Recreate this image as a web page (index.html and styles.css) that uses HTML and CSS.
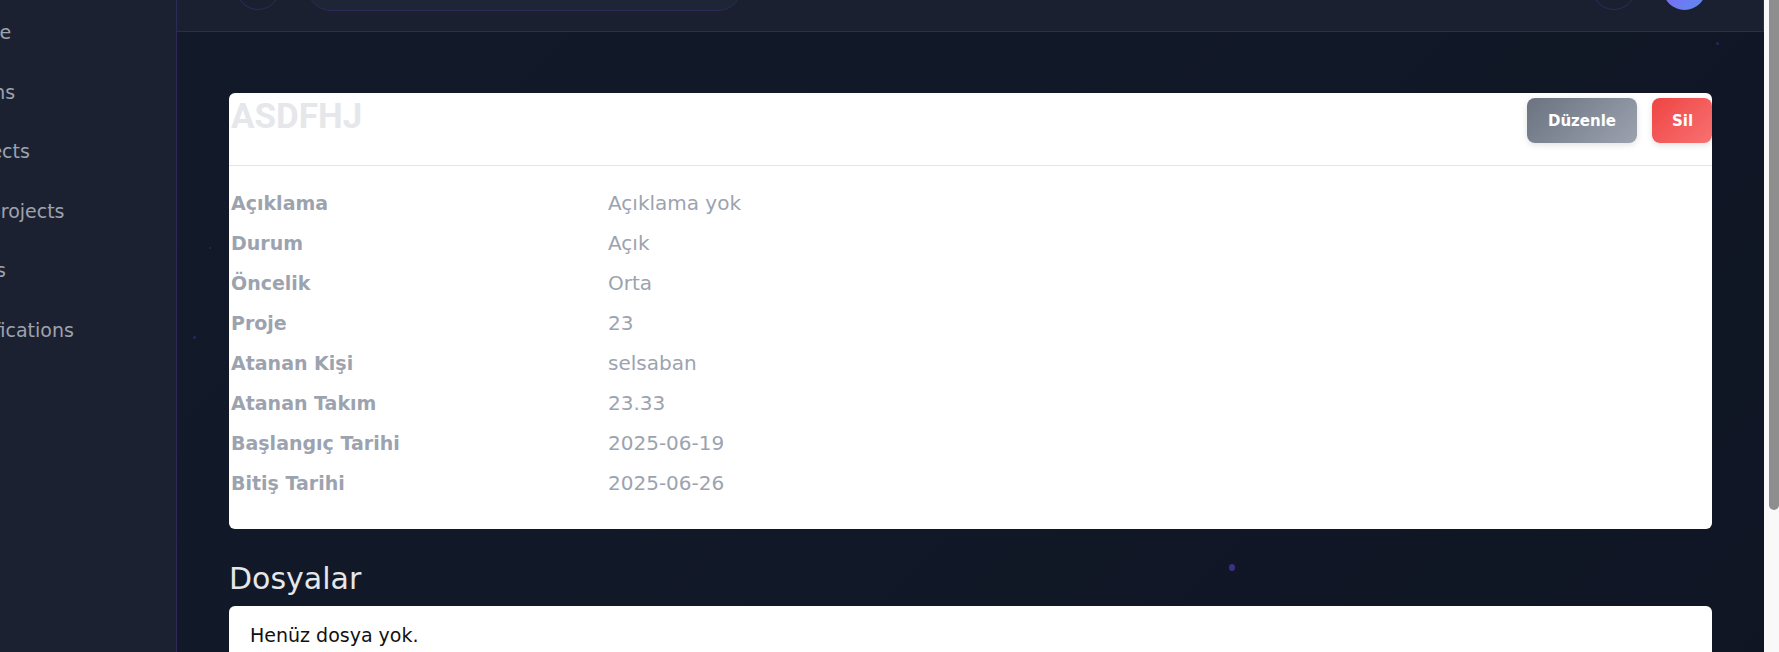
FILE: index.html
```html
<!DOCTYPE html>
<html lang="tr">
<head>
    <meta charset="UTF-8">
    <meta name="viewport" content="width=device-width, initial-scale=1.0">
    <title>Görev Detayı</title>
    <link rel="stylesheet" href="styles.css">
</head>
<body>
    <div class="layout">
        <aside class="sidebar">
            <nav class="nav">
                <a class="nav-item" href="#">Home</a>
                <a class="nav-item" href="#">Teams</a>
                <a class="nav-item" href="#">Projects</a>
                <a class="nav-item" href="#">My projects</a>
                <a class="nav-item" href="#">Tasks</a>
                <a class="nav-item" href="#">Notifications</a>
            </nav>
        </aside>

        <div class="main">
            <header class="topbar">
                <div class="topbar-left">
                    <button class="icon-btn" aria-label="Menu"></button>
                    <div class="search"></div>
                </div>
                <div class="topbar-right">
                    <button class="icon-btn" aria-label="Bildirimler"></button>
                    <div class="avatar"></div>
                </div>
            </header>

            <main class="content">
                <section class="card">
                    <div class="card-head">
                        <h1 class="task-title">ASDFHJ</h1>
                        <div class="actions">
                            <button class="btn btn-edit">Düzenle</button>
                            <button class="btn btn-delete">Sil</button>
                        </div>
                    </div>
                    <dl class="details">
                        <dt>Açıklama</dt><dd>Açıklama yok</dd>
                        <dt>Durum</dt><dd>Açık</dd>
                        <dt>Öncelik</dt><dd>Orta</dd>
                        <dt>Proje</dt><dd>23</dd>
                        <dt>Atanan Kişi</dt><dd>selsaban</dd>
                        <dt>Atanan Takım</dt><dd>23.33</dd>
                        <dt>Başlangıç Tarihi</dt><dd>2025-06-19</dd>
                        <dt>Bitiş Tarihi</dt><dd>2025-06-26</dd>
                    </dl>
                </section>

                <h2 class="section-title">Dosyalar</h2>
                <div class="files-box">Henüz dosya yok.</div>
            </main>
        </div>

        <!-- background particles -->
        <span class="dot dot-1"></span>
        <span class="dot dot-2"></span>
        <span class="dot dot-3"></span>
        <span class="dot dot-4"></span>
    </div>

    <div class="scrollbar">
        <div class="scrollbar-thumb"></div>
    </div>
</body>
</html>
```

FILE: styles.css
```css
body {
    margin: 0;
    display: flex;
    align-items: flex-start;
    height: 100vh;
    overflow: hidden;
    font-family: "DejaVu Sans", "Noto Sans", sans-serif;
    background-color: #111827;
}
.layout {
    position: relative;
    flex: 1;
    min-width: 0;
    display: flex;
    min-height: 834px;
}

/* fake page scrollbar */
.scrollbar {
    width: 15px;
    height: 100vh;
    flex-shrink: 0;
    display: flex;
    justify-content: flex-end;
    background-color: #f9f9f9;
}
.scrollbar-thumb {
    width: 10px;
    height: 510px;
    background-color: #8e8e8e;
    border-radius: 0 0 5px 5px;
}

/* sidebar */
.sidebar {
    width: 176px;
    flex-shrink: 0;
    background-color: #1c2131;
    border-right: 1px solid #2d2a5a;
    overflow: hidden;
}
.nav {
    display: flex;
    flex-direction: column;
    margin-left: -45px;
    padding-top: 2px;
}
.nav-item {
    padding: 16px 0 15.5px;
    line-height: 28px;
    font-size: 19px;
    color: #9ca3af;
    text-decoration: none;
    white-space: nowrap;
}

/* top bar */
.main {
    flex: 1;
    min-width: 0;
    background: linear-gradient(135deg, #121929 0%, #111827 40%, #0f1523 100%);
}
.topbar {
    display: flex;
    justify-content: space-between;
    align-items: flex-end;
    padding: 0 57px 21px 59px;
    box-sizing: border-box;
    height: 32px;
    background-color: #1b2030;
    border-right: 1px solid #2d2a5a;
    border-bottom: 1px solid #2d2a5a;
    overflow: hidden;
}
.topbar-left,
.topbar-right {
    display: flex;
    align-items: flex-end;
    gap: 27px;
}
.icon-btn {
    width: 44px;
    height: 44px;
    flex-shrink: 0;
    border: 1px solid #2d2a5a;
    border-radius: 50%;
    background: transparent;
}
.search {
    width: 433px;
    height: 46px;
    margin-bottom: -1px;
    border: 1px solid #2d2a5a;
    border-radius: 24px;
    background-color: #1e2536;
}
.avatar {
    width: 43px;
    height: 43px;
    border-radius: 50%;
    background: linear-gradient(135deg, #8b5cf6, #5b8def);
}

/* content */
.content {
    padding: 61px 52px 40px;
}
.card {
    background-color: #fff;
    border-radius: 6px;
    padding: 0 0 32px 2px;
}
.card-head {
    display: flex;
    justify-content: space-between;
    align-items: flex-start;
    height: 73px;
    box-sizing: border-box;
    padding-top: 2px;
    margin-left: -2px;
    padding-left: 2px;
    border-bottom: 1px solid #e4e0fb;
}
.task-title {
    margin: 2px 0 0;
    font-family: Roboto, "Liberation Sans", sans-serif;
    font-size: 35px;
    line-height: 40px;
    font-weight: 700;
    color: #e5e7eb;
}
.actions {
    display: flex;
    gap: 15px;
    margin-top: 3px;
}
.btn {
    height: 45px;
    padding: 0 20px;
    border: none;
    border-radius: 8px;
    font-family: "DejaVu Sans", "Noto Sans", sans-serif;
    font-size: 15px;
    font-weight: 700;
    color: #fff;
    cursor: pointer;
    box-shadow: 0 2px 6px rgba(0, 0, 0, 0.12);
}
.btn-edit {
    width: 110px;
    background: linear-gradient(135deg, #6b7280, #9ca3af);
}
.btn-delete {
    width: 60px;
    background: linear-gradient(135deg, #ef4444, #f87171);
}
.details {
    display: grid;
    grid-template-columns: 377px 1fr;
    row-gap: 12px;
    margin: 0;
    padding-top: 23px;
    font-size: 20px;
    line-height: 28px;
    color: #9ca3af;
}
.details dt {
    font-weight: 700;
    font-size: 19px;
}
.details dd {
    margin: 0;
}
.section-title {
    margin: 32px 0 9px;
    font-size: 30px;
    line-height: 36px;
    font-weight: 400;
    color: #e5e7eb;
}
.files-box {
    background-color: #fff;
    border-radius: 6px;
    padding: 15px 21px 40px;
    font-size: 19px;
    line-height: 28px;
    color: #111;
}

/* particles */
.dot {
    position: absolute;
    border-radius: 50%;
    background-color: #2b2660;
}
.dot-1 { left: 1716px; top: 42px; width: 3px; height: 3px; }
.dot-2 { left: 193px; top: 336px; width: 3px; height: 3px; }
.dot-3 { left: 209px; top: 247px; width: 2px; height: 2px; }
.dot-4 { left: 1229px; top: 564px; width: 6px; height: 7px; background-color: #3d3183; }
```
